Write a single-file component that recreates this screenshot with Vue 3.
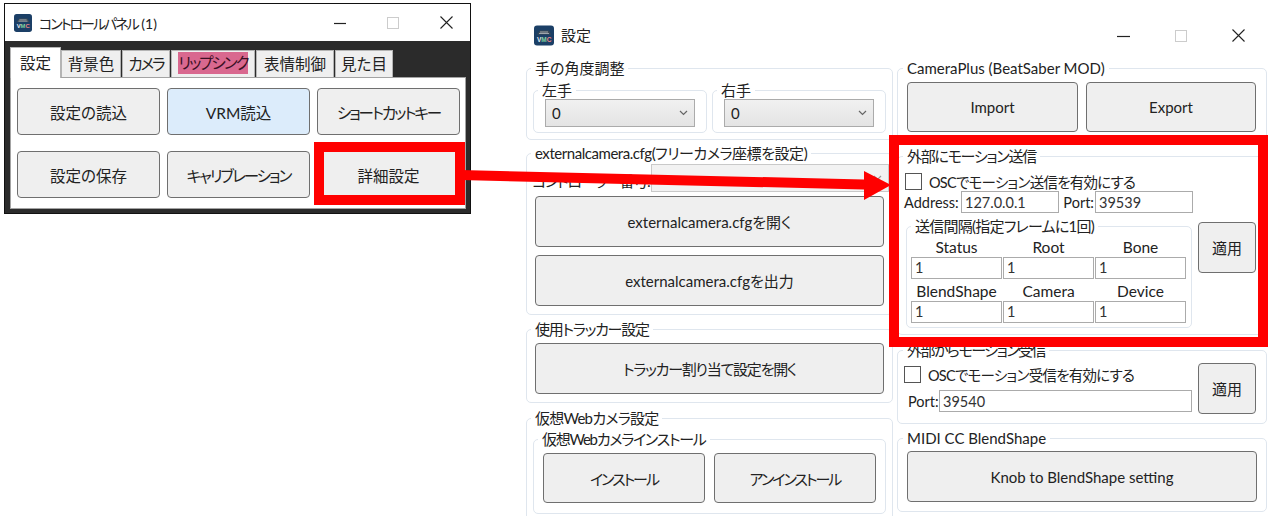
<script setup>
const tabs = [
  { label: '設定', active: true },
  { label: '背景色', w: 60 },
  { label: 'カメラ', w: 48, tight: true },
  { label: 'リップシンク', w: 84, pink: true, tight: true },
  { label: '表情制御', w: 78 },
  { label: '見た目', w: 58 },
]
const panelButtons = [
  { label: '設定の読込' },
  { label: 'VRM読込', blue: true },
  { label: 'ショートカットキー', tight: true },
  { label: '設定の保存' },
  { label: 'キャリブレーション', tight: true },
  { label: '詳細設定' },
]
const intervalRows = [
  ['Status', 'Root', 'Bone'],
  ['BlendShape', 'Camera', 'Device'],
]
</script>

<template>
  <div class="canvas">
    <!-- control panel window -->
    <section class="panel-window">
      <header class="panel-title">
        <svg class="app-icon small" viewBox="0 0 20 20">
          <rect width="20" height="20" rx="3" fill="#1b3f66" />
          <path d="M3 9 L6 5 H15 L17 9 Z" fill="#3d4a55" />
          <path d="M5 8h10M6 6.5h8" stroke="#c9ced2" stroke-width=".7" />
          <text x="3" y="16" font-size="6.5" font-weight="700" font-family="Liberation Sans"><tspan fill="#e8eef2">V</tspan><tspan fill="#7fd0a0">M</tspan><tspan fill="#e88">C</tspan></text>
        </svg>
        <span class="panel-name"><span class="ls-2">コントロールパネル</span> (1)</span>
        <span class="controls panel-controls">
          <svg width="12" height="12" viewBox="0 0 12 12"><path d="M0 6.5h12" stroke="#222" stroke-width="1.2" /></svg>
          <svg width="12" height="12" viewBox="0 0 12 12"><rect x=".5" y=".5" width="11" height="11" fill="none" stroke="#ccc" /></svg>
          <svg width="13" height="13" viewBox="0 0 13 13"><path d="M.5.5l12 12M12.5.5l-12 12" stroke="#222" stroke-width="1.1" /></svg>
        </span>
      </header>
      <div class="panel-body">
        <nav class="tabs">
          <span
            v-for="t in tabs"
            :key="t.label"
            class="tab"
            :class="{ active: t.active }"
            :style="t.w ? { width: t.w + 'px' } : null"
          ><span :class="{ pink: t.pink, 'ls-2': t.tight }">{{ t.label }}</span></span>
        </nav>
        <div class="panel-grid">
          <button
            v-for="b in panelButtons"
            :key="b.label"
            class="btn panel-btn"
            :class="{ blue: b.blue, 'ls-2': b.tight }"
          >{{ b.label }}</button>
        </div>
      </div>
    </section>

    <!-- settings window -->
    <section class="settings">
      <header class="settings-title">
        <svg class="app-icon" viewBox="0 0 20 20">
          <rect width="20" height="20" rx="3" fill="#1b3f66" />
          <path d="M3 9 L6 5 H15 L17 9 Z" fill="#3d4a55" />
          <path d="M5 8h10M6 6.5h8" stroke="#c9ced2" stroke-width=".7" />
          <text x="3" y="16" font-size="6.5" font-weight="700" font-family="Liberation Sans"><tspan fill="#e8eef2">V</tspan><tspan fill="#7fd0a0">M</tspan><tspan fill="#e88">C</tspan></text>
        </svg>
        <span class="settings-name">設定</span>
        <span class="controls settings-controls">
          <svg width="13" height="12" viewBox="0 0 13 12"><path d="M0 6.5h13" stroke="#222" stroke-width="1.2" /></svg>
          <svg width="12" height="12" viewBox="0 0 12 12"><rect x=".5" y=".5" width="11" height="11" fill="none" stroke="#ccc" /></svg>
          <svg width="13" height="13" viewBox="0 0 13 13"><path d="M.5.5l12 12M12.5.5l-12 12" stroke="#222" stroke-width="1.1" /></svg>
        </span>
      </header>

      <div class="columns">
        <div class="col col-left">
          <div class="group g-hand">
            <span class="legend">手の角度調整</span>
            <div class="hand-row">
              <div class="group sub-hand">
                <span class="legend">左手</span>
                <div class="select"><span>0</span><svg class="chev" width="9" height="6" viewBox="0 0 9 6"><path d="M1 1l3.5 3.5L8 1" fill="none" stroke="#666" stroke-width="1.2" /></svg></div>
              </div>
              <div class="group sub-hand">
                <span class="legend">右手</span>
                <div class="select"><span>0</span><svg class="chev" width="9" height="6" viewBox="0 0 9 6"><path d="M1 1l3.5 3.5L8 1" fill="none" stroke="#666" stroke-width="1.2" /></svg></div>
              </div>
            </div>
          </div>

          <div class="group g-camera">
            <span class="legend ls-05">externalcamera.cfg(フリーカメラ座標を設定)</span>
            <div class="camera-row">
              <span class="camera-label ls-12">コントローラー番号:</span>
              <div class="select disabled"><svg class="chev" width="9" height="6" viewBox="0 0 9 6"><path d="M1 1l3.5 3.5L8 1" fill="none" stroke="#999" stroke-width="1.2" /></svg></div>
            </div>
            <button class="btn wide">externalcamera.cfgを開く</button>
            <button class="btn wide">externalcamera.cfgを出力</button>
          </div>

          <div class="group g-tracker">
            <span class="legend ls-12">使用トラッカー設定</span>
            <button class="btn wide ls-12">トラッカー割り当て設定を開く</button>
          </div>

          <div class="group g-webcam">
            <span class="legend ls-08">仮想Webカメラ設定</span>
            <div class="group sub-webcam">
              <span class="legend ls-12">仮想Webカメラインストール</span>
              <button class="btn ls-2">インストール</button>
              <button class="btn ls-2">アンインストール</button>
            </div>
          </div>
        </div>

        <div class="col col-right">
          <div class="group g-plus">
            <span class="legend">CameraPlus (BeatSaber MOD)</span>
            <button class="btn">Import</button>
            <button class="btn">Export</button>
          </div>

          <div class="group g-send">
            <span class="legend ls-12">外部にモーション送信</span>
            <label class="check send-check"><span class="box"></span><span class="ls-08">OSCでモーション送信を有効にする</span></label>
            <div class="address-row">
              <span class="lab lab-address">Address:</span>
              <div class="field f98">127.0.0.1</div>
              <span class="lab lab-port">Port:</span>
              <div class="field f98">39539</div>
            </div>
            <div class="interval-row">
              <div class="group sub-interval">
                <span class="legend ls-08">送信間隔(指定フレームに1回)</span>
                <div class="interval-grid">
                  <template v-for="row in intervalRows" :key="row[0]">
                    <span v-for="l in row" :key="l" class="cell-label">{{ l }}</span>
                    <div v-for="l in row" :key="l + 'v'" class="field">1</div>
                  </template>
                </div>
              </div>
              <button class="btn apply">適用</button>
            </div>
          </div>

          <div class="group g-recv">
            <span class="legend ls-15">外部からモーション受信</span>
            <div class="recv-main">
              <label class="check"><span class="box"></span><span class="ls-08">OSCでモーション受信を有効にする</span></label>
              <div class="recv-port">
                <span class="lab">Port:</span>
                <div class="field f-port">39540</div>
              </div>
            </div>
            <button class="btn apply">適用</button>
          </div>

          <div class="group g-midi">
            <span class="legend">MIDI CC BlendShape</span>
            <button class="btn wide">Knob to BlendShape setting</button>
          </div>
        </div>
      </div>
    </section>

    <!-- annotations -->
    <div class="frame frame-a"></div>
    <div class="frame frame-b"></div>
    <svg class="arrow" width="1274" height="516" viewBox="0 0 1274 516">
      <path d="M460 170 L864 179.5 L864 171 L891 185 L864 200 L864 189.5 L460 180 Z" fill="#ff0000" />
    </svg>
  </div>
</template>

<style>
html, body { margin: 0; background: #fff; }
</style>

<style scoped>
.canvas {
  position: relative;
  width: 1274px;
  height: 516px;
  overflow: hidden;
  background: #fff;
  color: #222;
  font-family: "Lato", "Noto Sans CJK JP", sans-serif;
  font-size: 15px;
  font-feature-settings: "palt";
}
.ls-05 { letter-spacing: -0.45px; }
.ls-08 { letter-spacing: -0.75px; }
.ls-12 { letter-spacing: -1.25px; }
.ls-15 { letter-spacing: -1.5px; }
.ls-2 { letter-spacing: -2px; }
.app-icon { width: 20px; height: 21px; flex: none; }
.app-icon.small { width: 18px; height: 18px; }
.controls { display: flex; align-items: center; margin-left: auto; }

/* control panel window */
.panel-window {
  position: absolute;
  left: 4px;
  top: 3px;
  width: 467px;
  height: 211px;
  box-sizing: border-box;
  border: 1.5px solid #111;
  display: flex;
  flex-direction: column;
  background: #2b2b2b;
}
.panel-title {
  height: 37px;
  flex: none;
  background: #fff;
  display: flex;
  align-items: center;
  padding-left: 9px;
  box-sizing: border-box;
}
.panel-name { margin-left: 7px; font-size: 14px; }
.panel-controls { gap: 41px; padding-right: 17px; }
.panel-body {
  flex: 1;
  padding: 5px 4px 4px 5px;
  display: flex;
  flex-direction: column;
}
.tabs {
  display: flex;
  align-items: flex-end;
  height: 31px;
  flex: none;
  position: relative;
  z-index: 1;
}
.tab {
  height: 27px;
  box-sizing: border-box;
  margin-right: 1px;
  background: #efefef;
  border: 1px solid #b4b4b4;
  border-bottom: none;
  display: flex;
  align-items: center;
  justify-content: center;
  font-size: 15.5px;
  white-space: nowrap;
  padding-bottom: 2px;
}
.tab.active {
  width: 51px;
  height: 31px;
  margin-right: 0;
  margin-bottom: -1px;
  background: #fff;
  padding-bottom: 3px;
}
.pink { background: #d9688f; color: #3b1024; line-height: 22px; display: block; }
.panel-grid {
  flex: 1;
  box-sizing: border-box;
  background: #fff;
  border: 1.5px solid #a3a3a3;
  display: grid;
  grid-template-columns: repeat(3, 143px);
  grid-auto-rows: 47px;
  column-gap: 7px;
  row-gap: 16px;
  padding: 10px 0 0 6px;
}
.btn {
  font: inherit;
  font-feature-settings: inherit;
  color: #222;
  background: #efefef;
  border: 1.5px solid #6f6f6f;
  border-radius: 4px;
  padding: 0;
  box-sizing: border-box;
}
.panel-btn { font-size: 15.5px; }
.btn.blue { background: #dcecfb; }

/* settings window */
.settings {
  position: absolute;
  left: 526px;
  top: 10px;
  width: 741px;
}
.settings-title {
  height: 58px;
  box-sizing: border-box;
  padding: 15px 22px 0 8px;
  display: flex;
  align-items: flex-start;
}
.settings-name { margin-left: 7px; line-height: 21px; }
.settings-controls { gap: 45px; height: 21px; }
.columns { display: flex; gap: 4px; }
.col { display: flex; flex-direction: column; }
.col-left { width: 367px; }
.col-right { width: 370px; }
.group {
  position: relative;
  box-sizing: border-box;
  border: 1.5px solid #dfe6ee;
  border-radius: 5px;
}
.legend {
  position: absolute;
  left: 4px;
  top: -10px;
  padding: 0 4px;
  line-height: 18px;
  background: #fff;
  white-space: nowrap;
  font-size: 15px;
}
.col-right > .group > .legend { left: 5px; }

.g-hand { height: 72px; padding: 21px 6px 0; }
.hand-row { display: flex; gap: 5px; }
.sub-hand { width: 174px; height: 43px; padding: 8px 11px 0; }
.select {
  height: 28px;
  box-sizing: border-box;
  border: 1.5px solid #ababab;
  background: linear-gradient(#f1f1f1, #e4e4e4);
  display: flex;
  align-items: center;
  justify-content: space-between;
  padding: 0 6px;
}
.select.disabled { background: #f2f2f2; border-color: #c9c9c9; flex: 1; justify-content: flex-end; }

.g-camera {
  height: 162px;
  margin-top: 13px;
  padding: 10px 8px 0;
  display: flex;
  flex-direction: column;
}
.camera-row { display: flex; align-items: center; height: 28px; margin: 0 -5px 4px -3px; }
.camera-label { width: 119px; flex: none; padding-top: 5px; white-space: nowrap; overflow: hidden; }
.wide { height: 51px; flex: none; width: 100%; }
.g-camera .wide + .wide { margin-top: 8px; }

.g-tracker { height: 74px; margin-top: 14px; padding: 13px 8px 0; }
.g-webcam { height: 110px; margin-top: 15px; padding: 20px 6px 0; }
.sub-webcam {
  height: 75px;
  padding: 13px 9px 0;
  display: grid;
  grid-template-columns: 162px 162px;
  grid-auto-rows: 50px;
  column-gap: 9px;
}

.g-plus {
  height: 74px;
  padding: 13px 9px 0;
  display: grid;
  grid-template-columns: 171px 170px;
  grid-auto-rows: 50px;
  column-gap: 8px;
}
.g-send { height: 179px; margin-top: 14px; padding: 15px 7px 0 8px; }
.check { display: flex; align-items: center; height: 19px; gap: 7px; font-size: 14.5px; }
.send-check { margin-left: -1px; }
.box {
  width: 17px;
  height: 17px;
  box-sizing: border-box;
  border: 1.5px solid #555;
  background: #fff;
  flex: none;
}
.address-row { display: flex; align-items: center; height: 22px; margin-left: -2px; }
.lab { font-size: 14.5px; white-space: nowrap; }
.lab-address { width: 57px; flex: none; }
.lab-port { width: 36px; flex: none; text-align: right; padding-right: 1px; box-sizing: border-box; }
.field {
  height: 22px;
  box-sizing: border-box;
  border: 1.5px solid #ababab;
  background: #fff;
  display: flex;
  align-items: center;
  padding-left: 3px;
  font-size: 14.5px;
  color: #333;
}
.f98 { width: 98px; flex: none; }
.interval-row {
  display: flex;
  align-items: flex-start;
  gap: 6px;
  margin-top: 8.5px;
}
.sub-interval {
  width: 286px;
  height: 102px;
  margin-top: 4px;
  padding: 11px 4px 0;
  flex: none;
}
.interval-grid {
  display: grid;
  grid-template-columns: repeat(3, 91px);
  grid-template-rows: 19px 22px 22px 22px;
  column-gap: 1px;
}
.cell-label { text-align: center; font-size: 15.5px; line-height: 19px; }
.interval-grid .cell-label:nth-child(n + 7) { margin-top: 3px; }
.apply { width: 58px; height: 51px; flex: none; }

.g-recv {
  height: 74px;
  margin-top: 15px;
  padding: 12px 10px 0 6px;
  display: flex;
  justify-content: space-between;
  align-items: flex-start;
}
.g-recv .check { margin-top: 2px; }
.recv-port { display: flex; align-items: center; margin-top: 6px; padding-left: 4px; }
.recv-port .lab { width: 31px; flex: none; }
.f-port { width: 253px; flex: none; }
.g-midi { height: 74px; margin-top: 14px; padding: 12px 9px 0; }

/* annotations */
.frame {
  position: absolute;
  box-sizing: border-box;
  border: 10px solid #ff0000;
  z-index: 5;
}
.frame-a { left: 314px; top: 142px; width: 151px; height: 63px; }
.frame-b { left: 889px; top: 135px; width: 379px; height: 212px; }
.arrow { position: absolute; left: 0; top: 0; z-index: 6; pointer-events: none; }
</style>
